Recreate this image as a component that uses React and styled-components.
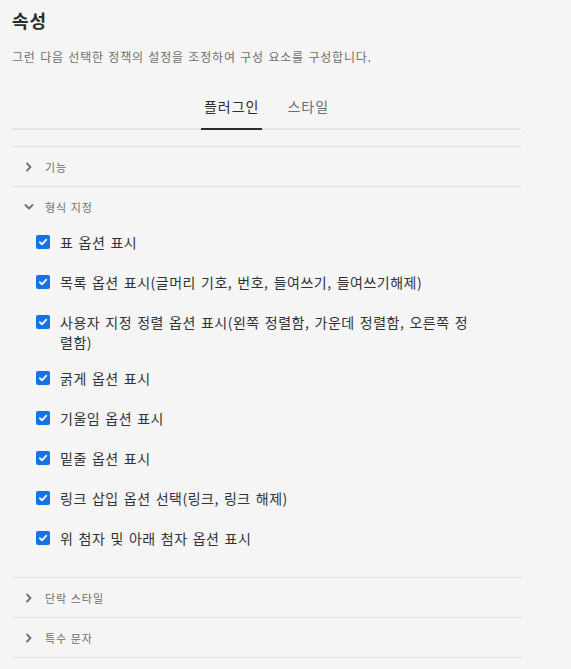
import styled, { createGlobalStyle } from 'styled-components'

const GlobalStyle = createGlobalStyle`
  body {
    margin: 0;
    background: #f5f5f5;
    font-family: "Noto Sans CJK KR", "Noto Sans", sans-serif;
  }
`

const options = [
  '표 옵션 표시',
  '목록 옵션 표시(글머리 기호, 번호, 들여쓰기, 들여쓰기해제)',
  '사용자 지정 정렬 옵션 표시(왼쪽 정렬함, 가운데 정렬함, 오른쪽 정렬함)',
  '굵게 옵션 표시',
  '기울임 옵션 표시',
  '밑줄 옵션 표시',
  '링크 삽입 옵션 선택(링크, 링크 해제)',
  '위 첨자 및 아래 첨자 옵션 표시',
]

const Chevron = ({ open }) => (
  <ChevronBox open={open}>
    <svg width="10" height="10" viewBox="0 0 10 10">
      <path d="M3 1.5 L6.5 5 L3 8.5" fill="none" stroke="#6e6e6e" strokeWidth="1.8" strokeLinecap="round" strokeLinejoin="round" />
    </svg>
  </ChevronBox>
)

const Checkbox = () => (
  <Box>
    <svg width="10" height="10" viewBox="0 0 10 10">
      <path d="M1.8 5.2 L4 7.4 L8.3 2.6" fill="none" stroke="#fff" strokeWidth="1.8" strokeLinecap="round" strokeLinejoin="round" />
    </svg>
  </Box>
)

const App = () => {
  return (
    <Panel>
      <GlobalStyle />
      <Title>속성</Title>
      <Description>그런 다음 선택한 정책의 설정을 조정하여 구성 요소를 구성합니다.</Description>
      <TabBar>
        <Tab active>플러그인</Tab>
        <Tab>스타일</Tab>
      </TabBar>
      <Accordion>
        <Item>
          <Header>
            <Chevron />
            기능
          </Header>
        </Item>
        <Item>
          <Header>
            <Chevron open />
            형식 지정
          </Header>
          <Content>
            {options.map(o => (
              <Row key={o}>
                <Checkbox />
                <Label>{o}</Label>
              </Row>
            ))}
          </Content>
        </Item>
        <Item>
          <Header>
            <Chevron />
            단락 스타일
          </Header>
        </Item>
        <Item>
          <Header>
            <Chevron />
            특수 문자
          </Header>
        </Item>
      </Accordion>
    </Panel>
  )
}

export default App

const Panel = styled.div`
  width: 509px;
  padding: 8px 0 0 12px;
`

const Title = styled.h2`
  margin: 0;
  font-size: 18px;
  line-height: 24px;
  font-weight: 700;
  letter-spacing: 1px;
  color: #2c2c2c;
`

const Description = styled.p`
  margin: 16px 0 0;
  font-size: 12px;
  line-height: 18px;
  letter-spacing: 0.8px;
  word-spacing: 1px;
  color: #6e6e6e;
`

const TabBar = styled.div`
  display: flex;
  justify-content: center;
  gap: 22px;
  margin-top: 18px;
  border-bottom: 2px solid #e4e4e4;
`

const Tab = styled.div`
  position: relative;
  padding: 0 3px;
  height: 44px;
  line-height: 44px;
  font-size: 14px;
  letter-spacing: 1px;
  color: ${p => (p.active ? '#2c2c2c' : '#6e6e6e')};
  &::after {
    content: '';
    display: ${p => (p.active ? 'block' : 'none')};
    position: absolute;
    left: 0;
    right: 0;
    bottom: -2px;
    height: 2px;
    background: #2c2c2c;
  }
`

const Accordion = styled.div`
  margin-top: 16px;
  border-top: 1px solid #e1e1e1;
`

const Item = styled.div`
  border-bottom: 1px solid #e1e1e1;
`

const Header = styled.div`
  display: flex;
  align-items: center;
  height: 39px;
  padding-left: 12px;
  font-size: 11px;
  letter-spacing: 1px;
  color: #6e6e6e;
`

const ChevronBox = styled.span`
  display: inline-flex;
  width: 10px;
  height: 10px;
  margin-right: 11px;
  transform: ${p => (p.open ? 'rotate(90deg)' : 'none')};
`

const Content = styled.div`
  display: flex;
  flex-direction: column;
  gap: 8px;
  padding: 0 0 23px 24px;
`

const Row = styled.div`
  display: flex;
  align-items: flex-start;
  min-height: 32px;
`

const Box = styled.span`
  flex: none;
  display: flex;
  align-items: center;
  justify-content: center;
  width: 14px;
  height: 14px;
  margin-top: 9px;
  border-radius: 2px;
  background: #1473e6;
`

const Label = styled.span`
  max-width: 414px;
  margin-left: 10px;
  padding: 6px 0 2px;
  font-size: 14px;
  line-height: 20px;
  letter-spacing: 0.5px;
  word-spacing: 1.5px;
  color: #323232;
`
